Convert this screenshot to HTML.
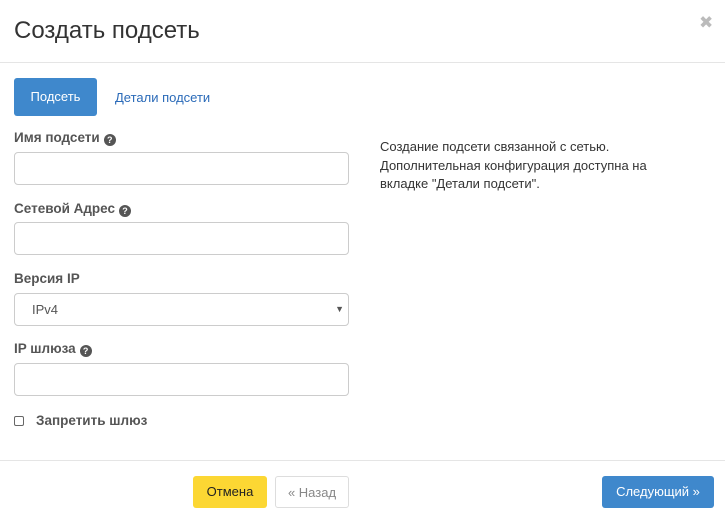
<!DOCTYPE html>
<html><head><meta charset="utf-8"><style>
*{box-sizing:border-box}
body{margin:0;width:725px;height:519px;background:#fff;font-family:"Liberation Sans","DejaVu Sans",sans-serif;color:#333;position:relative;overflow:hidden}
.a{position:absolute}
h1{position:absolute;left:14px;top:17px;margin:0;font-size:24px;font-weight:normal;color:#333}
.close{left:699px;top:13px;font-size:17px;color:#bbb;font-weight:bold}
.hr{left:0;width:725px;height:1px;background:#e5e5e5}
.tab{left:14px;top:78px;width:83px;height:38px;background:#3f88cc;border-radius:3px;color:#fff;font-size:13px;line-height:38px;text-align:center}
.tab2{left:115px;top:79px;line-height:38px;font-size:13px;color:#2a6ab8}
.lbl{left:14px;font-size:13.5px;font-weight:bold;color:#555}
.q{display:inline-block;width:12px;height:12px;border-radius:50%;background:#555;color:#fff;font-size:9px;line-height:12px;text-align:center;vertical-align:-1px;margin-left:4px}
.in{left:14px;width:335px;height:33px;border:1px solid #ccc;border-radius:4px}
.txt{left:380px;top:138px;font-size:13px;line-height:18.5px;color:#333;width:295px}
.btn{height:32px;border-radius:3px;font-size:13px;line-height:32px;text-align:center}
</style></head><body>
<h1>Создать подсеть</h1>
<div class="a close">✖</div>
<div class="a hr" style="top:62px"></div>
<div class="a tab">Подсеть</div>
<div class="a tab2">Детали подсети</div>
<div class="a lbl" style="top:130px">Имя подсети<span class="q">?</span></div>
<div class="a in" style="top:152px"></div>
<div class="a lbl" style="top:201px">Сетевой Адрес<span class="q">?</span></div>
<div class="a in" style="top:222px"></div>
<div class="a lbl" style="top:271px">Версия IP</div>
<div class="a in" style="top:293px;font-size:13px;line-height:31px;padding-left:17px;color:#555">IPv4<span style="position:absolute;right:4px;font-size:9px;color:#555">▼</span></div>
<div class="a lbl" style="top:341px">IP шлюза<span class="q">?</span></div>
<div class="a in" style="top:363px"></div>
<div class="a" style="left:14px;top:416px;width:10px;height:10px;border:1px solid #666;border-radius:2px"></div>
<div class="a lbl" style="left:36px;top:413px">Запретить шлюз</div>
<div class="a txt">Создание подсети связанной с сетью. Дополнительная конфигурация доступна на вкладке "Детали подсети".</div>
<div class="a hr" style="top:460px"></div>
<div class="a btn" style="left:193px;top:476px;width:74px;background:#fcd733;color:#222">Отмена</div>
<div class="a btn" style="left:275px;top:476px;width:74px;border:1px solid #ddd;color:#888">« Назад</div>
<div class="a btn" style="left:602px;top:476px;width:112px;background:#3f88cc;color:#fff">Следующий »</div>
</body></html>
